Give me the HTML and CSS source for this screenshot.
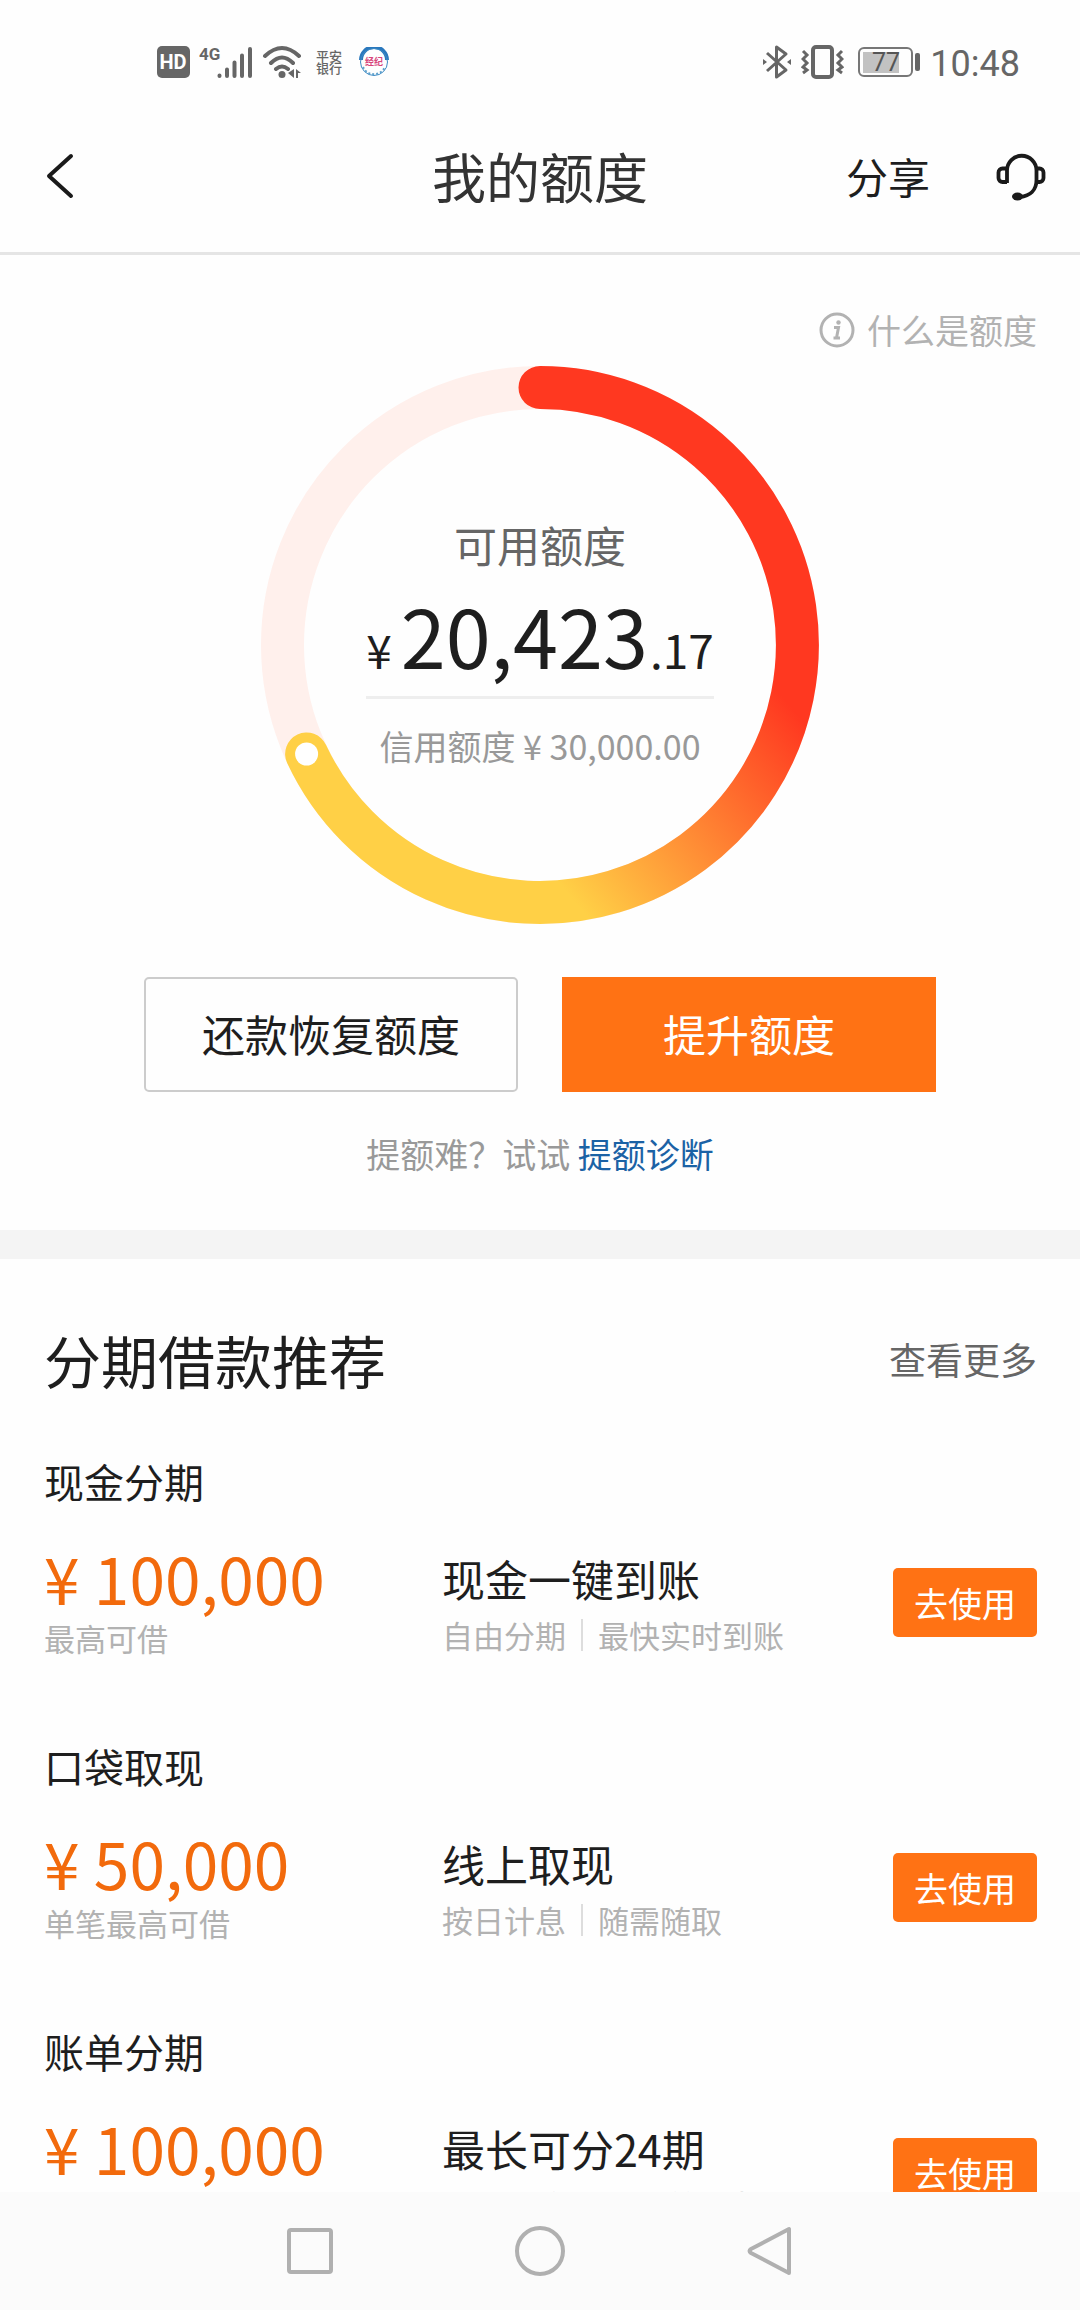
FILE: index.html
```html
<!DOCTYPE html>
<html lang="zh-CN">
<head>
<meta charset="utf-8">
<meta name="viewport" content="width=device-width, initial-scale=1">
<title>我的额度</title>
<link rel="stylesheet" href="styles.css">
</head>
<body>
<div class="status">
  <div class="status-group status-left">
    <svg class="ic-hd" viewBox="0 0 33 32"><rect width="33" height="32" rx="5" fill="#666"/><text x="16" y="23" text-anchor="middle" class="hd-text">HD</text></svg>
    <svg class="ic-signal" viewBox="0 0 54 34"><text x="0" y="15" class="net-text">4G</text><g stroke="#666" stroke-width="4" stroke-linecap="round"><path d="M20.500 30.500V31M28 24.500V31M35.500 17.500V31M43 10.500V31M51 4V31"/></g></svg>
    <svg class="ic-wifi" viewBox="0 0 40 34"><g fill="none" stroke="#666" stroke-width="4" stroke-linecap="round"><path d="M3 11Q20-5 37 11M9 18Q20 7 31 18M14 24Q20 19 26 24"/></g><circle cx="20" cy="29.500" r="3.500" fill="#666"/><path d="M32 24v9l-6-5zM34 24l5 4h-3v5h-2z" fill="#666"/></svg>
    <span class="bank">平安<br>银行</span>
    <svg class="ic-logo" viewBox="0 0 30 30"><path d="M2 13A13 13 0 0 1 28 13" fill="none" stroke="#2a78bd" stroke-width="4"/><circle cx="15" cy="15" r="13.500" fill="none" stroke="#3c8ac4" stroke-width="1"/><path d="M4 20A12 12 0 0 0 26 20" fill="none" stroke="#5da0cc" stroke-width="2" stroke-dasharray="2 2"/><text x="15" y="18" text-anchor="middle" class="logo-text">经纪</text></svg>
  </div>
  <div class="status-group">
    <svg class="ic-bt" viewBox="0 0 30 36"><path d="M5 9L24 26L14.500 33V3L24 10L5 27" fill="none" stroke="#666" stroke-width="3" stroke-linejoin="round"/><path d="M1 15l4 3-4 3zM29 15l-4 3 4 3z" fill="#666"/></svg>
    <svg class="ic-vib" viewBox="0 0 43 34"><rect x="12" y="2" width="19" height="30" rx="3" fill="none" stroke="#666" stroke-width="4"/><path d="M2 6l4 4-4 4 4 4-4 4 4 3-4 3M41 6l-4 4 4 4-4 4 4 4-4 3 4 3" fill="none" stroke="#666" stroke-width="3"/></svg>
    <svg class="ic-bat" viewBox="0 0 63 30"><rect x="1" y="1" width="53" height="28" rx="5" fill="none" stroke="#777" stroke-width="2"/><rect x="5" y="5" width="36" height="21" fill="#c2c2c2"/><rect x="57" y="6" width="5" height="18" rx="2" fill="#666"/><text x="28" y="24" text-anchor="middle" class="bat-text">77</text></svg>
    <span class="time">10:48</span>
  </div>
</div>

<header class="header">
  <button class="icon-btn back" type="button" aria-label="返回"><svg class="ic-back" viewBox="0 0 32 48"><path d="M27 4L5 24L27 44" fill="none" stroke="#1a1a1a" stroke-width="4" stroke-linecap="round" stroke-linejoin="round"/></svg></button>
  <h1 class="title">我的额度</h1>
  <div class="header-actions">
    <a class="share" href="#share">分享</a>
    <button class="icon-btn" type="button" aria-label="客服"><svg class="ic-head" viewBox="12 8 56 56"><g fill="none" stroke="#1a1a1a" stroke-width="3.800"><path d="M27 43V30.500A14.700 14.700 0 0 1 56.500 30.500V40C56.500 50 50 56 40 57M27 28.500H22.500a4 4 0 0 0-4 4V38a4 4 0 0 0 4 4H27M56.500 28.500H59.500a4 4 0 0 1 4 4V38a4 4 0 0 1-4 4H56.500"/></g><ellipse cx="37.500" cy="56.500" rx="5.500" ry="4" fill="#1a1a1a"/></svg></button>
  </div>
</header>

<main class="main">
  <section class="quota">
    <a class="what" href="#what"><svg class="ic-info" viewBox="0 0 36 36"><circle cx="18" cy="18" r="16" fill="none" stroke="#b2b2b2" stroke-width="3"/><circle cx="19.500" cy="10.500" r="2.200" fill="#b2b2b2"/><path d="M15 15.500h4.500l-2 10.500h3.500M17.500 26h-3" fill="none" stroke="#b2b2b2" stroke-width="3"/></svg>什么是额度</a>
    <div class="gauge">
      <svg class="ring" viewBox="0 0 560 560">
        <defs><linearGradient id="arc" gradientUnits="userSpaceOnUse" x1="531" y1="342" x2="309" y2="530"><stop offset="0" stop-color="#ff3820"/><stop offset="1" stop-color="#ffd046"/></linearGradient></defs>
        <circle cx="280" cy="280" r="257.500" fill="none" stroke="#fff0ec" stroke-width="43"/>
        <path d="M280 22.500A257.500 257.500 0 1 1 46.600 389" fill="none" stroke="url(#arc)" stroke-width="43" stroke-linecap="round"/>
        <circle cx="46.600" cy="389" r="11.500" fill="#fff"/>
      </svg>
      <div class="gauge-text">
        <p class="gauge-label">可用额度</p>
        <p class="gauge-amount"><span class="small yen">¥</span>20,423<span class="small cents">.17</span></p>
        <p class="gauge-credit">信用额度 ¥ 30,000.00</p>
      </div>
    </div>
    <div class="actions">
      <button class="btn btn-line" type="button">还款恢复额度</button>
      <button class="btn btn-fill" type="button">提升额度</button>
    </div>
    <p class="hint">提额难？试试 <a class="hint-link" href="#diagnose">提额诊断</a></p>
  </section>

  <section class="loans">
    <div class="loans-head">
      <h2 class="loans-title">分期借款推荐</h2>
      <a class="more" href="#more">查看更多</a>
    </div>
    <article class="loan">
      <h3 class="loan-name">现金分期</h3>
      <div class="loan-body">
        <div><p class="loan-amount">¥ 100,000</p><p class="note">最高可借</p></div>
        <div class="loan-info"><p class="loan-desc">现金一键到账</p><p class="note tags"><span>自由分期</span><span class="tag-next">最快实时到账</span></p></div>
        <button class="use" type="button">去使用</button>
      </div>
    </article>
    <article class="loan">
      <h3 class="loan-name">口袋取现</h3>
      <div class="loan-body">
        <div><p class="loan-amount">¥ 50,000</p><p class="note">单笔最高可借</p></div>
        <div class="loan-info"><p class="loan-desc">线上取现</p><p class="note tags"><span>按日计息</span><span class="tag-next">随需随取</span></p></div>
        <button class="use" type="button">去使用</button>
      </div>
    </article>
    <article class="loan">
      <h3 class="loan-name">账单分期</h3>
      <div class="loan-body">
        <div><p class="loan-amount">¥ 100,000</p><p class="note">最高可借</p></div>
        <div class="loan-info"><p class="loan-desc">最长可分24期</p><p class="note">灵活还款 缓解账单压力</p></div>
        <button class="use" type="button">去使用</button>
      </div>
    </article>
  </section>
</main>

<nav class="sysnav">
  <button class="icon-btn" type="button" aria-label="最近任务"><svg class="ic-nav" viewBox="0 0 52 52"><rect x="5" y="5" width="42" height="42" rx="2" fill="none" stroke="#b0b0b0" stroke-width="4"/></svg></button>
  <button class="icon-btn" type="button" aria-label="主页"><svg class="ic-nav" viewBox="0 0 52 52"><circle cx="26" cy="26" r="23" fill="none" stroke="#b0b0b0" stroke-width="4"/></svg></button>
  <button class="icon-btn" type="button" aria-label="返回"><svg class="ic-nav" viewBox="0 0 52 52"><path d="M45 4V48L7 28Q4 26 7 24Z" fill="none" stroke="#b0b0b0" stroke-width="4" stroke-linejoin="round"/></svg></button>
</nav>
</body>
</html>
```
FILE: styles.css
```css
* { box-sizing: border-box; margin: 0; padding: 0; }

body {
  height: 100vh;
  display: flex;
  flex-direction: column;
  background: #fefefe;
  color: #1e1e1e;
  font-family: "Noto Sans CJK SC", "Noto Sans", sans-serif;
  overflow: hidden;
}
a { color: inherit; text-decoration: none; }
h1, h2, h3 { font-weight: 400; }
button { font: inherit; border: 0; background: none; color: inherit; cursor: pointer; }
svg { display: block; flex: none; }
.icon-btn { display: flex; }

/* status bar */
.status {
  flex: none;
  display: flex;
  justify-content: space-between;
  align-items: center;
  height: 124px;
  padding: 0 60px 0 157px;
  color: #666;
}
.status-group { display: flex; align-items: center; gap: 9px; }
.ic-hd { width: 33px; height: 32px; }
.ic-signal { width: 54px; height: 34px; }
.ic-wifi { width: 40px; height: 34px; }
.ic-logo { width: 30px; height: 30px; }
.ic-bt { width: 30px; height: 36px; }
.ic-vib { width: 43px; height: 34px; }
.ic-bat { width: 63px; height: 30px; margin-left: 5px; }
.hd-text { font: 700 20px Roboto, sans-serif; fill: #fff; }
.net-text { font: 700 17px Roboto, sans-serif; fill: #666; }
.logo-text { font-size: 9px; font-weight: 700; fill: #d8457c; }
.bat-text { font: 400 25px Roboto, sans-serif; fill: #555; }
.bank { margin: 0 8px 0 5px; font-size: 13px; font-weight: 500; line-height: 12px; }
.time { font: 400 36px/44px Roboto, sans-serif; padding-top: 4px; }

/* page header */
.header {
  flex: none;
  display: grid;
  grid-template-columns: 1fr auto 1fr;
  align-items: center;
  padding: 0 32px 24px;
  border-bottom: 3px solid #e5e5e5;
}
.back { padding-left: 12px; }
.title { font-size: 54px; line-height: 104px; color: #333; }
.ic-back { width: 32px; height: 48px; }
.header-actions { display: flex; justify-content: flex-end; align-items: center; gap: 62px; }
.share { font-size: 42px; line-height: 60px; }
.ic-head { width: 56px; height: 56px; }

.main { flex: 1; min-height: 0; overflow: hidden; }

/* quota */
.quota {
  display: flex;
  flex-direction: column;
  align-items: center;
  padding: 51px 43px 52px;
  border-bottom: 29px solid #f4f4f4;
}
.what {
  align-self: flex-end;
  display: flex;
  align-items: center;
  gap: 12px;
  font-size: 34px;
  line-height: 48px;
  color: #b2b2b2;
}
.ic-info { width: 36px; height: 36px; }
.gauge { display: grid; justify-items: center; margin-top: 11px; }
.ring, .gauge-text { grid-area: 1 / 1; }
.ring { width: 560px; height: 560px; }
.gauge-text { padding-top: 149px; text-align: center; }
.gauge-label { font-size: 43px; line-height: 60px; color: #666; }
.gauge-amount {
  margin-top: 10px;
  padding-bottom: 12px;
  border-bottom: 3px solid #eee;
  font-size: 81px;
  line-height: 100px;
  color: #1e1e1e;
}
.small { font-size: 46px; line-height: 60px; }
.yen { margin-right: 9px; }
.cents { margin-left: 2px; }
.gauge-credit { margin-top: 22px; font-size: 34px; line-height: 50px; color: #999; }

.actions { display: flex; gap: 44px; margin-top: 52px; }
.btn { width: 374px; height: 115px; padding-bottom: 4px; font-size: 43px; line-height: 60px; }
.btn-line { border: 2px solid #ccc; border-radius: 5px; }
.btn-fill { background: #ff7214; color: #fff; }
.hint { margin-top: 38px; font-size: 34px; line-height: 48px; color: #999; }
.hint-link { color: #1b62a5; }

/* loans */
.loans { padding: 60px 43px 0 44px; }
.loans-head { display: flex; justify-content: space-between; align-items: center; margin-bottom: 54px; }
.loans-title { font-size: 57px; line-height: 80px; }
.more { font-size: 37px; line-height: 60px; color: #666; }
.loan { margin-bottom: 79px; }
.loan-name { font-size: 40px; line-height: 56px; }
.loan-body {
  display: grid;
  grid-template-columns: 398px 1fr auto;
  align-items: start;
  margin-top: 28px;
}
.loan-amount { font-size: 64px; line-height: 80px; color: #f26a0c; }
.note { font-size: 31px; line-height: 42px; color: #b2b2b2; }
.loan-info { padding-top: 11px; }
.loan-desc { margin-bottom: 6px; font-size: 43px; line-height: 60px; }
.tags { display: flex; align-items: center; }
.tag-next { margin-left: 15px; padding-left: 15px; border-left: 2px solid #ddd; line-height: 32px; }
.use {
  width: 144px;
  height: 69px;
  margin-top: 31px;
  border-radius: 5px;
  background: #ff7214;
  color: #fff;
  font-size: 34px;
  line-height: 48px;
}

/* system navigation */
.sysnav {
  flex: none;
  display: flex;
  justify-content: center;
  align-items: center;
  gap: 178px;
  height: 118px;
  background: #fbfbfb;
}
.ic-nav { width: 52px; height: 52px; }
```
